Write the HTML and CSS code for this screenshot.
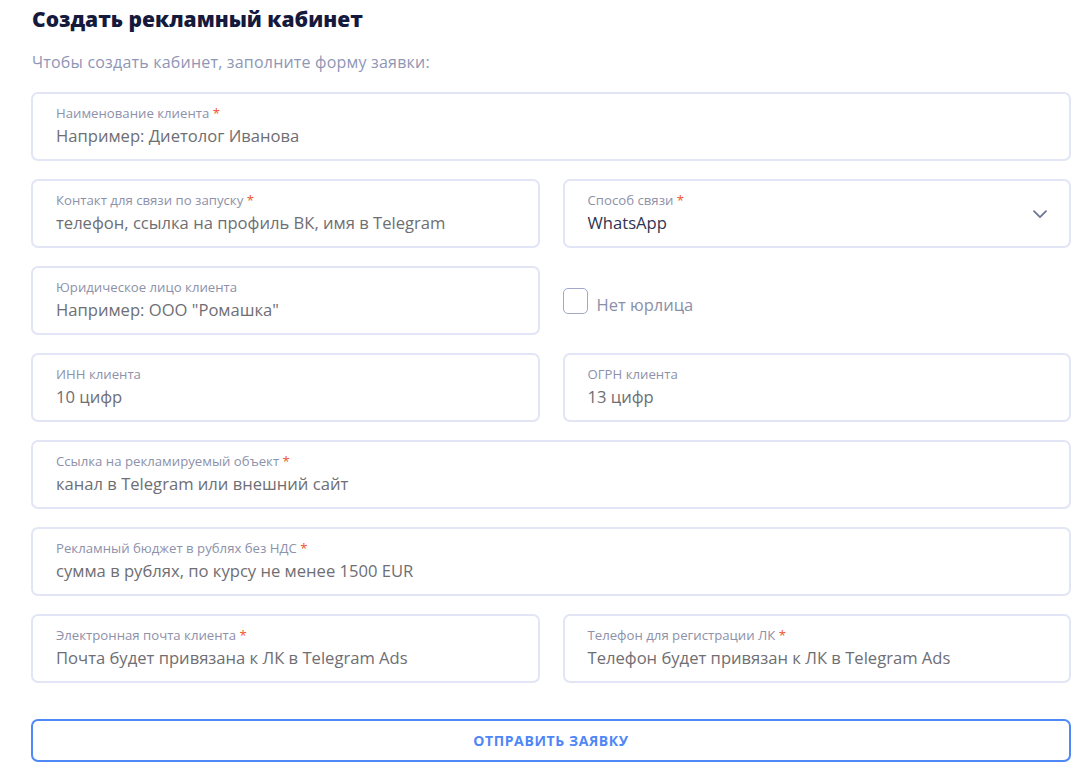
FILE: index.html
```html
<!DOCTYPE html>
<html lang="ru">
<head>
<meta charset="utf-8">
<title>Создать рекламный кабинет</title>
<link rel="stylesheet" href="styles.css">
</head>
<body>
<div class="page">
  <h1 class="title">Создать рекламный кабинет</h1>
  <p class="subtitle">Чтобы создать кабинет, заполните форму заявки:</p>
  <form class="form">
    <label class="field wide">
      <span class="label">Наименование клиента <b class="req">*</b></span>
      <span class="value">Например: Диетолог Иванова</span>
    </label>

    <label class="field">
      <span class="label">Контакт для связи по запуску <b class="req">*</b></span>
      <span class="value">телефон, ссылка на профиль ВК, имя в Telegram</span>
    </label>
    <div class="field select">
      <div class="select-text">
        <span class="label">Способ связи <b class="req">*</b></span>
        <span class="value filled">WhatsApp</span>
      </div>
      <svg class="chevron" width="14" height="9" viewBox="0 0 14 9"><path d="M1 1.2 L7 7.2 L13 1.2" fill="none" stroke="#6f7597" stroke-width="1.8" stroke-linecap="round" stroke-linejoin="round"/></svg>
    </div>

    <label class="field">
      <span class="label">Юридическое лицо клиента</span>
      <span class="value">Например: ООО "Ромашка"</span>
    </label>
    <div class="check-cell">
      <span class="checkbox"></span>
      <span class="check-label">Нет юрлица</span>
    </div>

    <label class="field">
      <span class="label">ИНН клиента</span>
      <span class="value">10 цифр</span>
    </label>
    <label class="field">
      <span class="label">ОГРН клиента</span>
      <span class="value">13 цифр</span>
    </label>

    <label class="field wide">
      <span class="label">Ссылка на рекламируемый объект <b class="req">*</b></span>
      <span class="value">канал в Telegram или внешний сайт</span>
    </label>

    <label class="field wide">
      <span class="label">Рекламный бюджет в рублях без НДС <b class="req">*</b></span>
      <span class="value">сумма в рублях, по курсу не менее 1500 EUR</span>
    </label>

    <label class="field">
      <span class="label">Электронная почта клиента <b class="req">*</b></span>
      <span class="value">Почта будет привязана к ЛК в Telegram Ads</span>
    </label>
    <label class="field">
      <span class="label">Телефон для регистрации ЛК <b class="req">*</b></span>
      <span class="value">Телефон будет привязан к ЛК в Telegram Ads</span>
    </label>
  </form>
  <button class="submit" type="button">ОТПРАВИТЬ ЗАЯВКУ</button>
</div>
</body>
</html>
```

FILE: styles.css
```css
* { box-sizing: border-box; }

html, body {
  margin: 0;
  padding: 0;
  background: #ffffff;
}

body {
  font-family: "Open Sans", Lato, "Liberation Sans", sans-serif;
}

.page {
  width: 1091px;
  padding: 7px 20px 0 31px;
}

.title {
  margin: 0 0 0 1px;
  font-size: 21px;
  line-height: 25px;
  font-weight: 800;
  color: #151a3d;
}

.subtitle {
  margin: 21px 0 0 1px;
  font-size: 16px;
  line-height: 19px;
  letter-spacing: 0.2px;
  color: #9096b5;
}

.form {
  margin-top: 20px;
  display: grid;
  grid-template-columns: 1fr 1fr;
  column-gap: 23px;
  row-gap: 18px;
}

.field {
  height: 69px;
  border: 2px solid #e2e5f6;
  border-radius: 7px;
  padding: 11px 22px 0 23px;
  display: flex;
  flex-direction: column;
}

.wide { grid-column: 1 / -1; }

.label {
  font-size: 13.2px;
  line-height: 16px;
  color: #8d91aa;
}

.req {
  color: #f0552d;
  font-weight: 400;
}

.value {
  margin-top: 5px;
  font-size: 16.6px;
  line-height: 20px;
  color: #6e6e73;
}

.value.filled {
  color: #2f3552;
}

.select {
  flex-direction: row;
  align-items: flex-start;
  justify-content: space-between;
}

.select-text {
  display: flex;
  flex-direction: column;
}

.chevron {
  margin-top: 18px;
}

.check-cell {
  display: flex;
  align-items: center;
  gap: 9px;
  height: 69px;
  padding-top: 1px;
}

.checkbox {
  width: 25px;
  height: 26px;
  border: 1.5px solid #a2a8c9;
  border-radius: 5px;
}

.check-label {
  font-size: 16.5px;
  line-height: 20px;
  color: #8b8fa8;
  margin-top: 8px;
}

.submit {
  display: block;
  width: 100%;
  height: 43px;
  margin-top: 36px;
  border: 2px solid #4f88f7;
  border-radius: 7px;
  background: #ffffff;
  color: #4f86f7;
  font-family: "Open Sans", Lato, sans-serif;
  font-weight: 700;
  font-size: 14px;
  letter-spacing: 0.6px;
}
```
